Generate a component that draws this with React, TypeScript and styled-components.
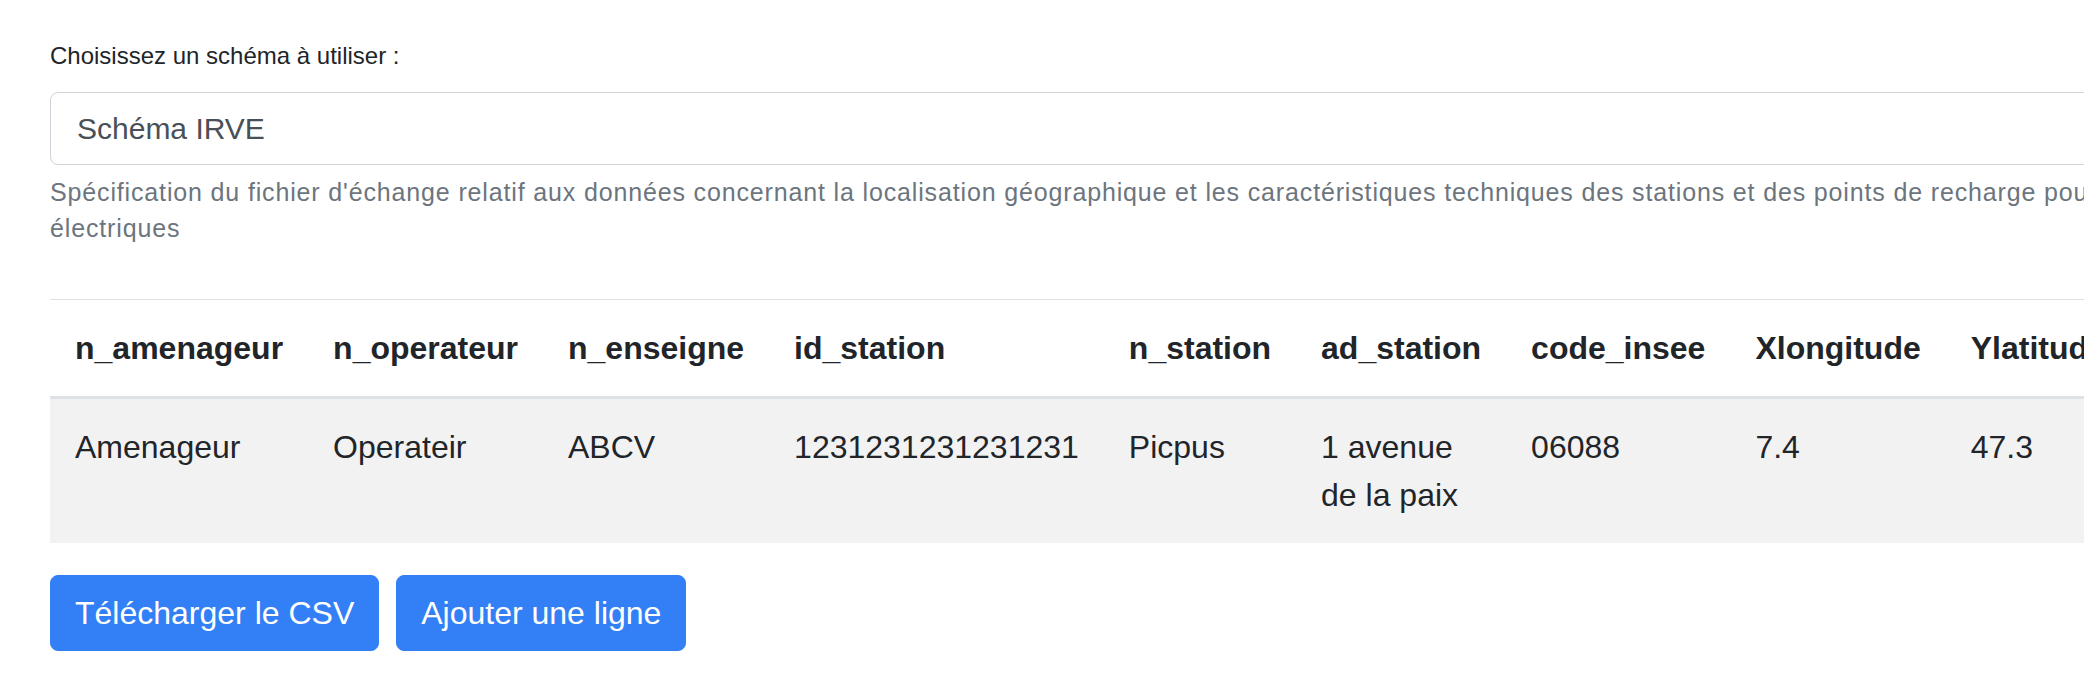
import React from "react";
import styled, { createGlobalStyle } from "styled-components";

const GlobalStyle = createGlobalStyle`
  html, body {
    margin: 0;
    padding: 0;
    overflow: hidden;
    background: #ffffff;
  }
  body {
    font-family: "Liberation Sans", Arial, sans-serif;
    color: #212529;
  }
  * { box-sizing: border-box; }
`;

const Page = styled.main`
  width: 2250px;
  padding: 38px 0 0 50px;
`;

const FormGroup = styled.div`
  display: flex;
  flex-direction: column;
`;

const Label = styled.label`
  display: block;
  font-size: 24px;
  line-height: 36px;
  color: #212529;
  margin-bottom: 18px;
`;

const Select = styled.select`
  appearance: none;
  -webkit-appearance: none;
  width: 100%;
  height: 73px;
  padding: 0 26px;
  font-family: "Liberation Sans", Arial, sans-serif;
  font-size: 30px;
  line-height: 45px;
  color: #495057;
  background: #ffffff;
  border: 1px solid #ced4da;
  border-radius: 8px;
  outline: none;
`;

const Help = styled.small`
  display: block;
  margin-top: 9px;
  font-size: 25px;
  line-height: 36px;
  letter-spacing: 0.85px;
  color: #6c757d;
`;

const TableWrap = styled.div`
  margin-top: 53px;
  overflow: hidden;
`;

const Table = styled.table`
  width: 100%;
  border-collapse: collapse;
  font-size: 32px;
  line-height: 48px;
  color: #212529;
`;

const Th = styled.th`
  text-align: left;
  font-weight: 700;
  padding: 24px 25px;
  border-top: 1px solid #dee2e6;
  border-bottom: 3px solid #dee2e6;
  vertical-align: bottom;
`;

const Tr = styled.tr<{ $striped?: boolean }>`
  background: ${(p) => (p.$striped ? "#f2f2f2" : "transparent")};
`;

const Td = styled.td`
  padding: 24px 25px;
  vertical-align: top;
`;

const Actions = styled.div`
  display: flex;
  gap: 17px;
  margin-top: 32px;
`;

const Button = styled.button`
  font-family: "Liberation Sans", Arial, sans-serif;
  font-size: 32px;
  line-height: 48px;
  padding: 13px 24px;
  color: #ffffff;
  background: #3380f6;
  border: 1px solid #3380f6;
  border-radius: 8px;
  cursor: pointer;
`;

const columns = [
  "n_amenageur",
  "n_operateur",
  "n_enseigne",
  "id_station",
  "n_station",
  "ad_station",
  "code_insee",
  "Xlongitude",
  "Ylatitude",
  "nbre_pdc",
  "id_pdc",
  "puiss_max",
  "type_prise",
  "acces_recharge",
  "accessibilite",
  "observations",
  "date_maj",
  "source",
];

const row = [
  "Amenageur",
  "Operateir",
  "ABCV",
  "1231231231231231",
  "Picpus",
  "1 avenue de la paix",
  "06088",
  "7.4",
  "47.3",
  "1",
  "FR*A01*P1",
  "22",
  "EF-T2",
  "payant",
  "24/7",
  "",
  "2019-06-01",
  "",
];

export default function App() {
  return (
    <>
      <GlobalStyle />
      <Page>
        <FormGroup>
          <Label htmlFor="schema">Choisissez un schéma à utiliser :</Label>
          <Select id="schema" defaultValue="irve">
            <option value="irve">Schéma IRVE</option>
          </Select>
          <Help>
            Spécification du fichier d'échange relatif aux données concernant la
            localisation géographique et les caractéristiques techniques des
            stations et des points de recharge pour véhicules électriques
          </Help>
        </FormGroup>
        <TableWrap>
          <Table>
            <thead>
              <tr>
                {columns.map((c) => (
                  <Th key={c}>{c}</Th>
                ))}
              </tr>
            </thead>
            <tbody>
              <Tr $striped>
                {row.map((v, i) => (
                  <Td key={i}>{v}</Td>
                ))}
              </Tr>
            </tbody>
          </Table>
        </TableWrap>
        <Actions>
          <Button type="button">Télécharger le CSV</Button>
          <Button type="button">Ajouter une ligne</Button>
        </Actions>
      </Page>
    </>
  );
}
